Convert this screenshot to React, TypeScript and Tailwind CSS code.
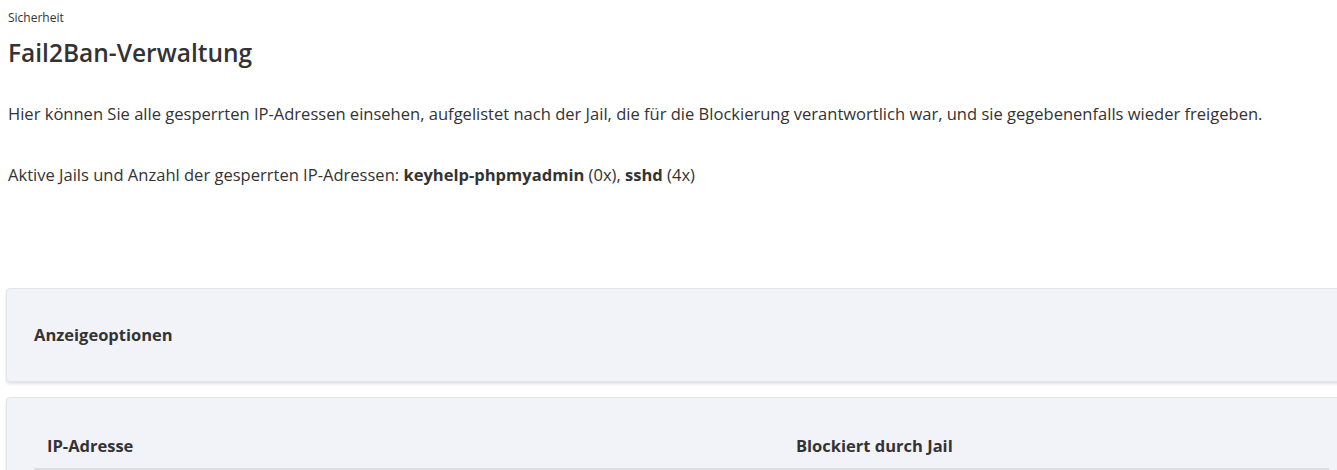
export default function App() {
  return (
    <div className="h-[470px] w-full overflow-hidden bg-white text-[#333] font-['Open_Sans',sans-serif]">
      <div className="pl-2">
        <div className="pt-[10px] text-[12px] leading-[16px]">Sicherheit</div>
        <h1 className="mt-[11px] text-[24.5px] leading-[32px] font-semibold">Fail2Ban-Verwaltung</h1>
        <p className="mt-[33px] text-[16.55px] leading-[24px]">
          Hier können Sie alle gesperrten IP-Adressen einsehen, aufgelistet nach der Jail, die für die Blockierung verantwortlich war, und sie gegebenenfalls wieder freigeben.
        </p>
        <p className="mt-[37px] text-[16.55px] leading-[24px]">
          Aktive Jails und Anzahl der gesperrten IP-Adressen: <b className="font-bold">keyhelp-phpmyadmin</b> (0x), <b className="font-bold">sshd</b> (4x)
        </p>
      </div>

      <div className="ml-[6px] mr-[-20px] mt-[101px] flex flex-col gap-[15px]">
        <div className="rounded-[4px] border border-[#e3e4e8] bg-[#f2f3f8] shadow-[0_2px_3px_rgba(0,0,0,0.12)] h-[94px] flex items-center px-[27px]">
          <h2 className="text-[16.5px] font-bold">Anzeigeoptionen</h2>
        </div>

        <div className="rounded-[4px] border border-[#e3e4e8] bg-[#f2f3f8] shadow-[0_2px_3px_rgba(0,0,0,0.12)] pt-[36px] px-[27px]">
          <div className="grid grid-cols-[749px_1fr] border-b-2 border-[#dcdde1] text-[16.5px] font-bold">
            <div className="px-[13px] pb-[9px]">IP-Adresse</div>
            <div className="px-[13px] pb-[9px]">Blockiert durch Jail</div>
          </div>
          <div className="h-[40px]" />
        </div>
      </div>
    </div>
  );
}
